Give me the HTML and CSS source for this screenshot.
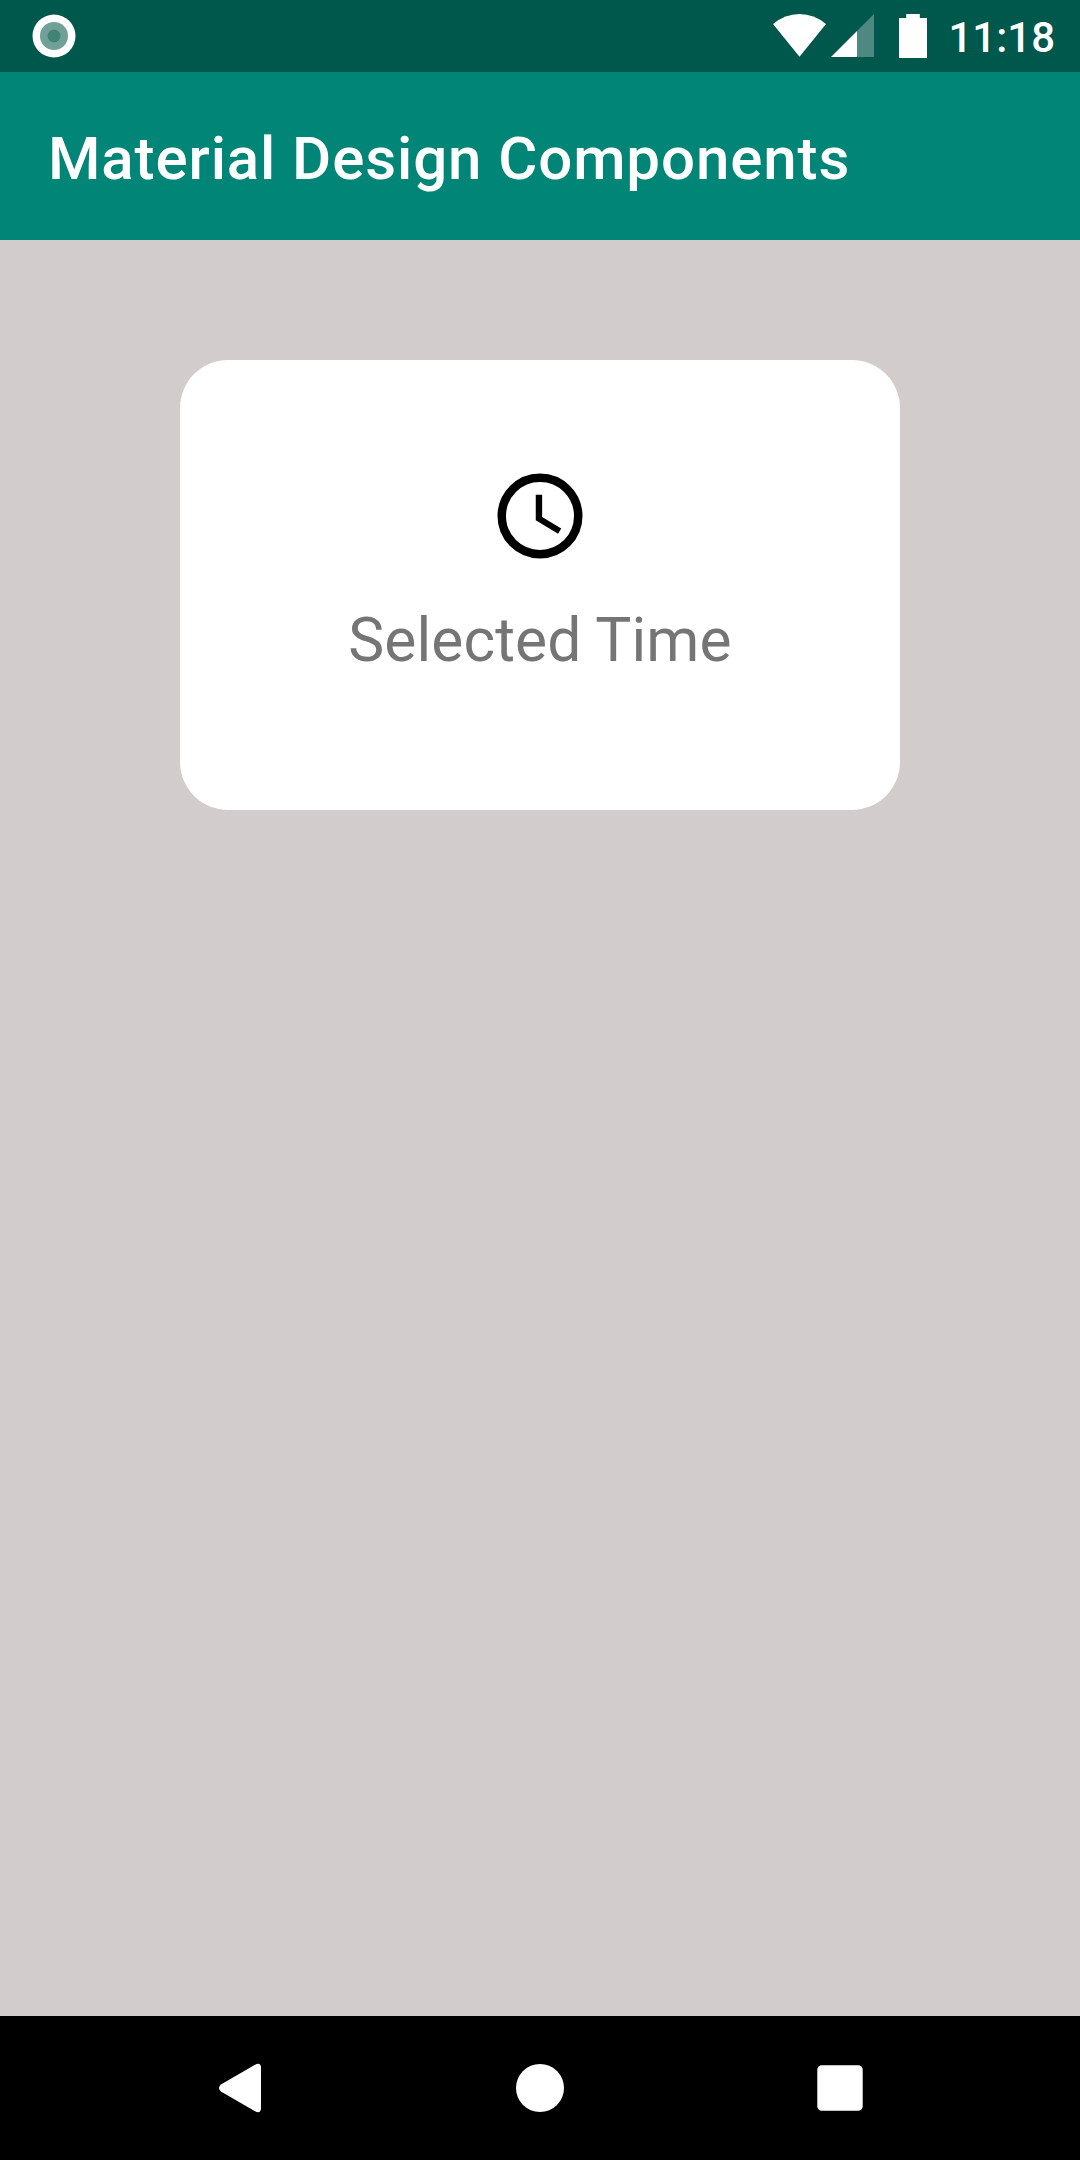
FILE: index.html
```html
<!DOCTYPE html>
<html lang="en">
<head>
<meta charset="utf-8">
<title>Material Design Components</title>
<link rel="stylesheet" href="styles.css">
</head>
<body>
<div class="screen">
  <div class="status-bar">
    <svg class="status-dot" viewBox="0 0 44 44" width="44" height="44">
      <circle cx="22" cy="22" r="21.5" fill="#fff"/>
      <circle cx="22" cy="22" r="14" fill="#6fa198"/>
      <circle cx="22" cy="22" r="6.5" fill="#428377"/>
    </svg>
    <div class="status-right">
      <svg class="wifi" viewBox="0 0 54 44" width="54" height="44">
        <path d="M0 10Q12 0 26.5 0T53 10L26.5 42.8z" fill="#fff"/>
      </svg>
      <svg class="signal" viewBox="0 0 44 44" width="44" height="44">
        <path d="M43 0V43H26V17z" fill="#fff" fill-opacity=".3"/>
        <path d="M0 43L26 17V43z" fill="#fff"/>
      </svg>
      <svg class="battery" viewBox="0 0 28 44" width="28" height="44">
        <path d="M7.2 0H20.8V4H28V44H0V4H7.2z" fill="#fff"/>
      </svg>
      <span class="time">11:18</span>
    </div>
  </div>
  <header class="app-bar"><h1 class="title">Material Design Components</h1></header>
  <main class="content">
    <section class="card">
      <svg class="clock" viewBox="0 0 24 24" width="102" height="102">
        <circle cx="12" cy="12" r="9" fill="none" stroke="#000" stroke-width="2"/>
        <path d="M12.5 7H11v6l5.25 3.15.75-1.23-4.5-2.67z"/>
      </svg>
      <p class="label">Selected Time</p>
    </section>
  </main>
  <nav class="nav-bar">
    <svg viewBox="0 0 60 60" width="60" height="60">
      <path d="M10.9 26.6L45 6.7Q51 4 51 10V50Q51 56 45 53.3L10.9 33.4Q7.1 30 10.9 26.6z" fill="#fff"/>
    </svg>
    <svg viewBox="0 0 60 60" width="60" height="60">
      <circle cx="30" cy="30" r="24" fill="#fff"/>
    </svg>
    <svg viewBox="0 0 60 60" width="60" height="60">
      <rect x="7.3" y="7.3" width="45.4" height="45.4" rx="4.5" fill="#fff"/>
    </svg>
  </nav>
</div>
</body>
</html>
```
FILE: styles.css
```css
* {
  box-sizing: border-box;
}

body {
  margin: 0;
  font-family: Roboto, sans-serif;
}

.screen {
  display: flex;
  flex-direction: column;
  width: 1080px;
  height: 2160px;
  background: #d2cccc;
}

.status-bar {
  display: flex;
  justify-content: space-between;
  height: 72px;
  padding: 14px 25px 0 32px;
  background: #00574b;
  color: #fff;
}

.status-right {
  display: flex;
}

.signal {
  margin-left: 4px;
}

.battery {
  margin-left: 24px;
}

.time {
  margin-left: 21px;
  font-size: 42px;
  font-weight: 500;
  line-height: 47px;
}

.app-bar {
  height: 168px;
  padding: 51px 48px 0;
  background: #008577;
  color: #fff;
}

.title {
  margin: 0;
  font-size: 60px;
  font-weight: 500;
  line-height: 71px;
  letter-spacing: 0.9px;
}

.content {
  flex: 1;
  padding: 120px 180px 0;
}

.card {
  display: flex;
  flex-direction: column;
  align-items: center;
  height: 450px;
  padding-top: 105px;
  border-radius: 48px;
  background: #fff;
}

.label {
  margin: 38px 0 0;
  color: #757575;
  font-size: 60.5px;
  line-height: 71px;
  letter-spacing: 0.08px;
}

.nav-bar {
  display: flex;
  justify-content: center;
  align-items: center;
  gap: 240px;
  height: 144px;
  background: #000;
}
```
